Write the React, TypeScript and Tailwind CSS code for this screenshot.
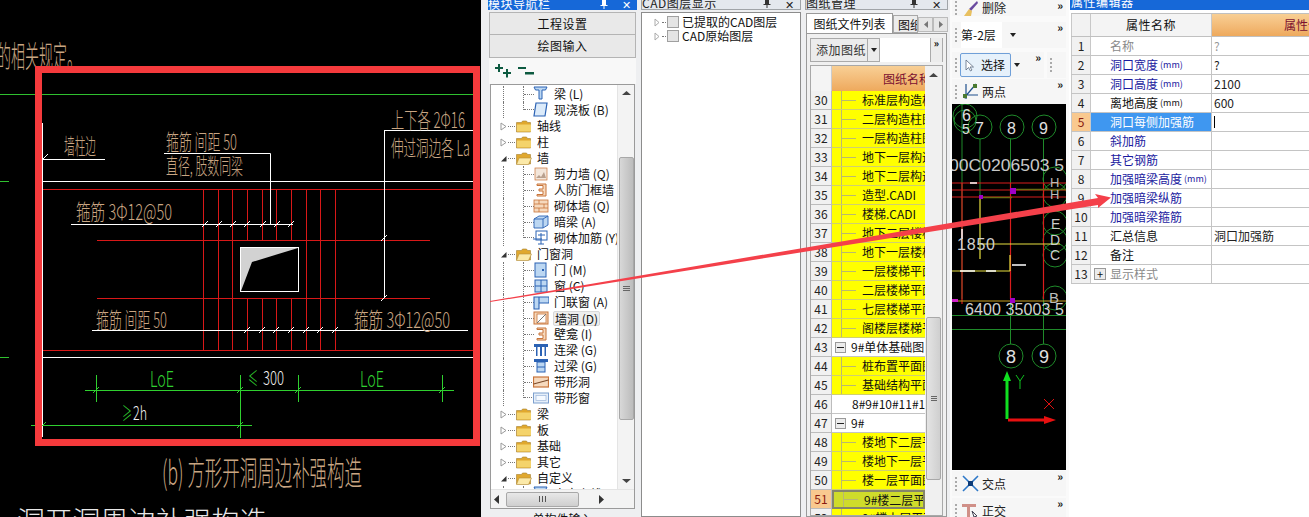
import React from "react";

const tan = "#c9a683";

const Pin = ({ color }: { color: string }) => (
  <svg width="8" height="9" viewBox="0 0 8 9" className="shrink-0">
    <path d="M2 0h4v5h1.5v1H4.5v3h-1V6H.5V5H2z" fill={color} />
  </svg>
);

const TitleBar = ({ title, active }: { title: string; active?: boolean }) => (
  <div
    className={`h-[10px] shrink-0 overflow-hidden flex items-center justify-between pr-[6px] text-[12px] leading-[10px] ${
      active ? "bg-[#1668d8] text-white" : "bg-[#e4e8ee] text-[#222] border border-t-0 border-[#a0a4a8]"
    }`}
  >
    <span className="-mt-[3px] whitespace-nowrap tracking-[0.5px]">{title}</span>
    <span className="flex items-center gap-[14px] -mt-[2px]">
      <Pin color={active ? "#fff" : "#333"} />
      <span className="text-[11px] leading-[10px] font-light">✕</span>
    </span>
  </div>
);

const Folder = ({ open }: { open?: boolean }) => (
  <svg width="16" height="13" viewBox="0 0 16 13" className="shrink-0">
    <path d="M0.5 2.5h5l1-1.5h4l1 1.5h3v9.5h-14z" fill="#e0a82e" stroke="#a5802f" strokeWidth="0.6" />
    {open ? (
      <path d="M3 6h12.5l-3 6.5H.5z" fill="#fbe9a8" stroke="#b58f3a" strokeWidth="0.6" />
    ) : (
      <path d="M1 4.5h14v7H1z" fill="#f4d36b" />
    )}
  </svg>
);

const TreeIcon = ({ kind }: { kind: string }) => {
  const blue = "#2b62b4";
  const lt = "#bcd7f2";
  const or = "#c8743a";
  const pe = "#f6d9bd";
  const shapes: Record<string, React.ReactNode> = {
    beam: <path d="M1 1h13l-1.5 3H9v9H6V4H2.5z" fill={lt} stroke={blue} strokeWidth="1" />,
    slab: <path d="M3 1h11l-2 13H1z" fill="#dcebfa" stroke={blue} strokeWidth="1.2" />,
    shear: (
      <>
        <rect x="2" y="2" width="12" height="12" fill="#f3e6da" stroke={or} strokeWidth="0.7" />
        <path d="M3 12l3-3 2 2 3-5 2 6z" fill="#b9a08e" />
      </>
    ),
    jamb: <path d="M4 2h9v12H4v-1.5h6V9H6V7h4V3.5H4z" fill={pe} stroke={or} strokeWidth="1" />,
    brick: (
      <>
        <rect x="1" y="2" width="14" height="12" fill={pe} stroke={or} strokeWidth="0.8" />
        <path d="M1 6h14M1 10h14M6 2v4M11 6v4M6 10v4" stroke={or} strokeWidth="0.8" />
      </>
    ),
    dark: <path d="M1 5l5-3h9v9l-5 3H1zM1 5h9v9M10 5l5-3" fill={lt} stroke={blue} strokeWidth="0.9" />,
    rebar: (
      <>
        <rect x="3" y="1" width="11" height="9" fill="#fff" stroke={blue} strokeWidth="1" />
        <path d="M0 9h9M5 5h7M8 3v11M5 14h6" stroke={blue} strokeWidth="1" fill="none" />
      </>
    ),
    door: (
      <>
        <rect x="2" y="1" width="11" height="14" fill={lt} stroke={blue} strokeWidth="1" />
        <rect x="9" y="7" width="2" height="2" fill={blue} />
      </>
    ),
    window: (
      <>
        <rect x="2" y="2" width="12" height="12" fill={lt} stroke={blue} strokeWidth="1" />
        <path d="M8 2v12M2 8h12" stroke={blue} strokeWidth="1" />
      </>
    ),
    doorwin: <path d="M1 3h5v12H1zM6 3h10v6H6z" fill={lt} stroke={blue} strokeWidth="1.1" />,
    hole: (
      <>
        <rect x="1" y="2" width="14" height="12" fill={pe} stroke={or} strokeWidth="1" />
        <rect x="4" y="4" width="9" height="9" fill="#fff" stroke={or} strokeWidth="0.8" />
        <path d="M4 13l9-9" stroke="#777" strokeWidth="1" />
      </>
    ),
    link: <path d="M1 2h14v3h-2v9h-1.5V5H9v9H7V5H4.5v9H3V5H1z" fill={blue} />,
    lintel: (
      <>
        <path d="M1 1h14v3H1z" fill={blue} />
        <rect x="4" y="4" width="8" height="10" fill={lt} stroke={blue} strokeWidth="1" />
        <path d="M4 9h8" stroke={blue} />
      </>
    ),
    strip: (
      <>
        <rect x="0.5" y="3" width="15" height="10" fill={pe} stroke={or} strokeWidth="1.2" />
        <path d="M0.5 10l15-4" stroke="#7a4a2a" strokeWidth="1.2" />
      </>
    ),
    stripw: (
      <>
        <rect x="0.5" y="3" width="15" height="10" fill="#e6eff9" stroke="#7d9fce" strokeWidth="1" />
        <rect x="3" y="5.5" width="10" height="5" fill="#f6faff" stroke="#9cb6da" strokeWidth="0.7" />
      </>
    ),
  };
  return (
    <svg width="16" height="16" viewBox="0 0 16 16" className="shrink-0 -ml-[1px]">
      {shapes[kind]}
    </svg>
  );
};

type Row = { label: string; kind?: string; open?: boolean; hot?: boolean; last?: boolean };

const treeRows: Row[] = [
  { label: "梁 (L)", kind: "beam" },
  { label: "现浇板 (B)", kind: "slab", last: true },
  { label: "轴线" },
  { label: "柱" },
  { label: "墙", open: true },
  { label: "剪力墙 (Q)", kind: "shear" },
  { label: "人防门框墙", kind: "jamb" },
  { label: "砌体墙 (Q)", kind: "brick" },
  { label: "暗梁 (A)", kind: "dark" },
  { label: "砌体加筋 (Y)", kind: "rebar", last: true },
  { label: "门窗洞", open: true },
  { label: "门 (M)", kind: "door" },
  { label: "窗 (C)", kind: "window" },
  { label: "门联窗 (A)", kind: "doorwin" },
  { label: "墙洞 (D)", kind: "hole", hot: true },
  { label: "壁龛 (I)", kind: "jamb" },
  { label: "连梁 (G)", kind: "link" },
  { label: "过梁 (G)", kind: "lintel" },
  { label: "带形洞", kind: "strip" },
  { label: "带形窗", kind: "stripw", last: true },
  { label: "梁" },
  { label: "板" },
  { label: "基础" },
  { label: "其它" },
  { label: "自定义", open: true },
  { label: "自定义线", kind: "beam" },
];

const ScrollArrow = ({ d }: { d: string }) => (
  <svg width="9" height="6" viewBox="0 0 9 6">
    <path d={d} fill="#444" />
  </svg>
);

const ModuleNav = () => (
  <div className="w-[156px] pl-[7px] shrink-0 flex flex-col">
    <TitleBar title="模块导航栏" active />
    <div className="mx-[1px] mt-[2px] h-[23px] shrink-0 flex items-center justify-center bg-[#e9e9e9] border border-[#b4b4b4] text-[12px] text-[#111] tracking-[0.5px]">
      工程设置
    </div>
    <div className="mx-[1px] h-[23px] shrink-0 flex items-center justify-center bg-[#e9e9e9] border border-t-0 border-[#b4b4b4] text-[12px] text-[#111] tracking-[0.5px]">
      绘图输入
    </div>
    <div className="mx-[1px] h-[26px] shrink-0 flex items-center gap-[6px] pl-[6px] bg-[#f8f8f8]">
      <svg width="17" height="14" viewBox="0 0 17 14">
        <path d="M3 0h2v3h3v2H5v3H3V5H0V3h3zM11 5h2v3h3v2h-3v3.500h-2V10H8V8h3z" fill="#0d5a40" />
      </svg>
      <svg width="17" height="14" viewBox="0 0 17 14">
        <path d="M0 3h8v2H0zM7 8h9v2.500H7z" fill="#0d5a40" />
      </svg>
    </div>
    <div className="mx-[2px] h-[425px] shrink-0 border border-[#9a9a9a] bg-white flex flex-col overflow-hidden">
      <div className="flex flex-1 min-h-0">
        <div className="w-[126px] overflow-hidden pt-[1px] text-[12px] text-[#111]">
          {treeRows.map((r) => (
            <div key={r.label + (r.kind ?? "")} className="h-4 flex items-center whitespace-nowrap">
              {r.kind ? (
                <>
                  <span className="ml-[12px] w-[20px] h-full shrink-0 border-l border-dotted border-[#777]" />
                  <span
                    className={`w-[11px] shrink-0 flex items-center border-l border-dotted border-[#777] ${
                      r.last ? "h-2 self-start items-end" : "h-full"
                    }`}
                  >
                    <span className="w-full border-t border-dotted border-[#777]" />
                  </span>
                  <TreeIcon kind={r.kind} />
                  <span
                    className={`ml-[4px] px-[1px] ${
                      r.hot ? "bg-[#eeeeee] border border-[#d8d8d8] rounded-[2px] h-[15px] leading-[13px]" : ""
                    }`}
                  >
                    {r.label}
                  </span>
                </>
              ) : (
                <>
                  <span className="ml-[9px] w-[7px] shrink-0 flex items-center">
                    {r.open ? (
                      <svg width="7" height="7" viewBox="0 0 7 7">
                        <path d="M6.5 1v5.5H1z" fill="#333" />
                      </svg>
                    ) : (
                      <svg width="7" height="9" viewBox="0 0 7 9">
                        <path d="M1 1l5 3.5L1 8z" fill="#fff" stroke="#999" />
                      </svg>
                    )}
                  </span>
                  <span className="w-[7px] mx-[1px] shrink-0 border-t border-dotted border-[#777]" />
                  <Folder open={r.open} />
                  <span className="ml-[5px]">{r.label}</span>
                </>
              )}
            </div>
          ))}
        </div>
        <div className="w-[17px] ml-auto flex flex-col items-center bg-[#f3f3f3] border-l border-[#e4e4e4]">
          <div className="h-[16px] flex items-center">
            <ScrollArrow d="M4.5 1L9 5H0z" />
          </div>
          <div className="mt-[56px] w-[15px] h-[263px] rounded-[2px] border border-[#a8a8a8] bg-gradient-to-r from-[#d8d8d8] to-[#bcbcbc] flex flex-col items-center justify-center gap-[1px]">
            <span className="w-[7px] h-[1px] bg-[#666]" />
            <span className="w-[7px] h-[1px] bg-[#666]" />
            <span className="w-[7px] h-[1px] bg-[#666]" />
          </div>
          <div className="mt-auto h-[16px] flex items-center">
            <ScrollArrow d="M0 1h9L4.500 5z" />
          </div>
        </div>
      </div>
      <div className="h-[19px] shrink-0 bg-[#f3f3f3] border-t border-[#e4e4e4] flex items-center px-[3px]">
        <svg width="6" height="9" viewBox="0 0 6 9">
          <path d="M5 0v9L0 4.5z" fill="#333" />
        </svg>
        <div className="ml-[6px] w-[73px] h-[15px] rounded-[2px] border border-[#a8a8a8] bg-gradient-to-b from-[#e8e8e8] to-[#cfcfcf] flex items-center justify-center gap-[1px]">
          <span className="w-[1px] h-[6px] bg-[#555]" />
          <span className="w-[1px] h-[6px] bg-[#555] ml-[1px]" />
          <span className="w-[1px] h-[6px] bg-[#555] ml-[1px]" />
        </div>
        <svg width="6" height="9" viewBox="0 0 6 9" className="ml-[20px]">
          <path d="M0 0v9l5-4.5z" fill="#333" />
        </svg>
      </div>
    </div>
    <div className="mx-[2px] mt-[3px] shrink-0 text-center text-[12px] leading-[14px] text-[#111]">单构件输入</div>
  </div>
);

const Check = ({ label }: { label: string }) => (
  <div className="h-[14px] flex items-center whitespace-nowrap">
    <svg width="7" height="9" viewBox="0 0 7 9" className="ml-[12px] shrink-0">
      <path d="M1 1l4 3.5L1 8z" fill="#fff" stroke="#aaa" />
    </svg>
    <span className="w-[4px] mx-[1px] border-t border-dotted border-[#777]" />
    <span className="w-[12px] h-[12px] border border-[#a0a0a0] bg-[#e4e4e4] shrink-0" />
    <span className="ml-[3px] text-[12px] text-[#111]">{label}</span>
  </div>
);

const CadLayers = () => (
  <div className="w-[166px] shrink-0 pl-[4px] pr-[2px] flex flex-col">
    <TitleBar title="CAD图层显示" />
    <div className="h-[505px] shrink-0 mt-[2px] border border-[#8c8c8c] bg-white pt-[2px] flex flex-col">
      <Check label="已提取的CAD图层" />
      <Check label="CAD原始图层" />
    </div>
  </div>
);

type Drawing = { n: number; name: string; type?: "group" | "plain"; sel?: boolean };

const drawings: Drawing[] = [
  { n: 30, name: "标准层构造柱平面" },
  { n: 31, name: "二层构造柱图" },
  { n: 32, name: "一层构造柱图" },
  { n: 33, name: "地下一层构造柱" },
  { n: 34, name: "地下二层构造柱" },
  { n: 35, name: "造型.CADI" },
  { n: 36, name: "楼梯.CADI" },
  { n: 37, name: "地下二层楼梯" },
  { n: 38, name: "地下一层楼梯" },
  { n: 39, name: "一层楼梯平面" },
  { n: 40, name: "二层楼梯平面" },
  { n: 41, name: "七层楼梯平面" },
  { n: 42, name: "阁楼层楼梯平面" },
  { n: 43, name: "9#单体基础图", type: "group" },
  { n: 44, name: "桩布置平面图" },
  { n: 45, name: "基础结构平面图" },
  { n: 46, name: "8#9#10#11#15#", type: "plain" },
  { n: 47, name: "9#", type: "group" },
  { n: 48, name: "楼地下二层平面" },
  { n: 49, name: "楼地下一层平面" },
  { n: 50, name: "楼一层平面图" },
  { n: 51, name: "9#楼二层平面", sel: true },
  { n: 52, name: "9#楼上层平面" },
];

const MinusBox = () => (
  <span className="w-[11px] h-[11px] ml-[3px] shrink-0 border border-[#9a9a9a] bg-[#ececec] flex items-center justify-center">
    <span className="w-[7px] h-[1px] bg-[#222]" />
  </span>
);

const Drawings = () => (
  <div className="w-[147px] shrink-0 pl-[2px] pr-[2px] flex flex-col">
    <TitleBar title="图纸管理" />
    <div className="h-[21px] shrink-0 mt-[2px] relative flex items-end pl-[1px]">
      <div className="h-[20px] w-[87px] bg-white border border-b-0 border-[#9a9a9a] text-[12px] text-center leading-[19px] text-[#111]">
        图纸文件列表
      </div>
      <div className="h-[18px] w-[25px] overflow-hidden bg-[#ececec] border border-[#a8a8a8] text-[12px] leading-[17px] pl-[4px] whitespace-nowrap text-[#111]">
        图纸楼层
      </div>
      <div className="h-[15px] w-[15px] ml-[0px] mb-[1px] bg-[#e6e6e6] border border-[#bbb] flex items-center justify-center">
        <svg width="4" height="7" viewBox="0 0 4 7">
          <path d="M4 0v7L0 3.5z" fill="#777" />
        </svg>
      </div>
      <div className="h-[15px] w-[15px] mb-[1px] bg-[#e6e6e6] border border-[#bbb] flex items-center justify-center">
        <svg width="4" height="7" viewBox="0 0 4 7">
          <path d="M0 0v7l4-3.5z" fill="#777" />
        </svg>
      </div>
    </div>
    <div className="mx-[1px] h-[484px] shrink-0 border border-[#9a9a9a] bg-[#f0f0f0] px-[3px] pt-[4px] flex flex-col">
      <div className="h-[24px] flex bg-white border-r border-[#aaa] shrink-0">
        <div className="w-[58px] flex items-center justify-between bg-[#ececec] border border-[#aaa]">
          <span className="pl-[5px] text-[12px] text-[#333] tracking-[0.5px] whitespace-nowrap">添加图纸</span>
        </div>
        <div className="w-[12px] flex items-center justify-center bg-[#ececec] border border-l-0 border-[#aaa]">
          <svg width="6" height="4" viewBox="0 0 6 4">
            <path d="M0 0h6L3 4z" fill="#222" />
          </svg>
        </div>
        <span className="ml-auto w-[12px] bg-[#ececec] border-l border-[#aaa] text-[10px] leading-[10px] font-bold text-center">»</span>
      </div>
      <div className="mt-[3px] flex-1 min-h-0 overflow-hidden border border-[#a8a8a8] bg-white flex">
        <div className="w-[114px] shrink-0">
          <div className="h-[25px] flex">
            <div className="w-[21px] bg-[#f4f4f4] border-r border-[#ccc]" />
            <div className="flex-1 overflow-hidden bg-gradient-to-b from-[#f8cf95] to-[#eea95c] pl-[51px] text-[12px] leading-[25px] text-[#7a1030] whitespace-nowrap">
              图纸名称
            </div>
          </div>
          {drawings.map((d) => (
            <div key={d.n} className="h-[19px] flex">
              <div
                className={`w-[21px] shrink-0 text-center text-[12px] leading-[18px] border-b border-r border-[#bcbcbc] ${
                  d.sel ? "bg-[#f9c98f] text-[#8a1a10]" : "bg-[#f1f1f1] text-[#222]"
                }`}
              >
                {d.n}
              </div>
              <div
                className={`flex-1 overflow-hidden flex items-center text-[12px] text-[#111] whitespace-nowrap ${
                  d.sel
                    ? "bg-[#cfdc2b] border-2 border-[#85856a]"
                    : d.type
                      ? "bg-white border-b border-[#c4c4c4]"
                      : "bg-[#ffff00] border-b border-[#cfcf70]"
                }`}
              >
                {d.type === "group" ? (
                  <>
                    <MinusBox />
                    <span className="ml-[5px]">{d.name}</span>
                  </>
                ) : d.type === "plain" ? (
                  <span className="ml-[20px]">{d.name}</span>
                ) : (
                  <>
                    <span className="ml-[9px] w-[15px] h-full shrink-0 flex items-center border-l border-[#b9b970]">
                      <span className="w-full border-t border-[#b9b970]" />
                    </span>
                    <span className="ml-[6px]">{d.name}</span>
                  </>
                )}
              </div>
            </div>
          ))}
        </div>
        <div className="flex-1 bg-[#f0f0f0] flex flex-col items-center">
          <div className="h-[18px] flex items-center">
            <ScrollArrow d="M4.5 1L9 5H0z" />
          </div>
          <div className="mt-[233px] w-[15px] h-[163px] rounded-[2px] border border-[#a8a8a8] bg-gradient-to-r from-[#e4e4e4] to-[#cfcfcf] flex flex-col items-center justify-center gap-[1px]">
            <span className="w-[6px] h-[1px] bg-[#666]" />
            <span className="w-[6px] h-[1px] bg-[#666]" />
            <span className="w-[6px] h-[1px] bg-[#666]" />
          </div>
        </div>
      </div>
    </div>
  </div>
);

const Grip = () => (
  <span className="flex flex-col gap-[2px] ml-[3px] w-[3px] shrink-0">
    <span className="w-[2px] h-[2px] bg-[#aaa]" />
    <span className="w-[2px] h-[2px] bg-[#aaa]" />
    <span className="w-[2px] h-[2px] bg-[#aaa]" />
    <span className="w-[2px] h-[2px] bg-[#aaa]" />
  </span>
);

const More = () => <span className="ml-auto mr-[3px] self-start text-[11px] leading-[11px] font-bold text-[#111]">»</span>;

const Viewport = () => (
  <svg
    viewBox="952 105 114 366"
    className="w-[114px] h-[366px] shrink-0 bg-black block"
    fontFamily="'Liberation Sans', sans-serif"
  >
    <g stroke="#1f8a2a" fill="none">
      <circle cx="965" cy="117" r="12" />
      <circle cx="965" cy="122" r="11" />
      <circle cx="980" cy="128" r="12" />
      <circle cx="1012" cy="128" r="12" />
      <circle cx="1044" cy="128" r="12" />
      <circle cx="1055" cy="180" r="12" />
      <circle cx="1055" cy="196" r="12" />
      <circle cx="1055" cy="224" r="12" />
      <circle cx="1055" cy="241" r="12" />
      <circle cx="1055" cy="256" r="12" />
      <circle cx="1055" cy="299" r="12" />
      <circle cx="1011" cy="357" r="12" />
      <circle cx="1044" cy="357" r="12" />
      <path d="M962 105V300M980 140V198M1010.5 140V190M1043.5 140V300M1010.5 300V345M1043.500 300V345M952 316.5H1066M952 330.5H1066" />
    </g>
    <g stroke="#d81c1c" fill="none" strokeWidth="1.2">
      <path d="M952 184H1066M952 191H1066M952 198H1066M962 184V305M1010.5 184V300M1043.5 184V300" />
    </g>
    <g stroke="#e8e040" fill="none" strokeWidth="1.2">
      <path d="M980 198V260M980 245H1060M952 272H1010M1010 256V272" />
    </g>
    <path d="M980 198.5H1012M1012 190.5H1066" stroke="#6a6a10" strokeWidth="1.5" />
    <path d="M952 302H1066" stroke="#c9a020" strokeWidth="1.2" />
    <path d="M960 272H975M986 272H996M1012 266H1026" stroke="#fff" strokeWidth="1.5" />
    <path d="M970 184H977M962 230V240" stroke="#fff" strokeWidth="1.5" />
    <rect x="1010" y="189" width="6" height="6" fill="#a000c8" />
    <rect x="979" y="196" width="4" height="4" fill="#a000c8" />
    <rect x="1010" y="299" width="5" height="5" fill="#a000c8" />
    <rect x="952" y="300" width="6" height="3" fill="#d020c8" />
    <g fill="#e0e0e0" fontSize="16" fontWeight="300">
      <text x="962" y="122">6</text>
      <text x="962" y="135" fontSize="14">5</text>
      <text x="975" y="135">7</text>
      <text x="1007" y="135">8</text>
      <text x="1039" y="135">9</text>
      <text x="949" y="172" fontSize="16" textLength="115" lengthAdjust="spacingAndGlyphs" fill="#c8c8c8">
        00C0206503 5
      </text>
      <text x="957" y="251" fontSize="16" textLength="38" lengthAdjust="spacing" fill="#d0d0d0">1850</text>
      <text x="965" y="316" fontSize="16" textLength="99" lengthAdjust="spacing" fill="#d0d0d0">6400 35003 5</text>
      <text x="1006" y="364" fontSize="18">8</text>
      <text x="1039" y="364" fontSize="18">9</text>
      <text x="1050" y="188" fontSize="13" fill="#bbb">H</text>
      <text x="1050" y="200" fontSize="13" fill="#bbb">H</text>
      <text x="1051" y="230" fontSize="14" fill="#ccc">E</text>
      <text x="1050" y="246" fontSize="14" fill="#ccc">D</text>
      <text x="1050" y="261" fontSize="14" fill="#ccc">C</text>
      <text x="1049" y="304" fontSize="15" fill="#bbb">B</text>
    </g>
    <path d="M1005.5 420V382H1003L1007 372L1011 382H1008.5V420z" fill="#10e020" />
    <path d="M1008 419.5H1044V417L1056 421L1044 425V422.5H1008z" fill="#e81010" />
    <path d="M1016 376L1020 382L1024 376M1020 382V390" stroke="#10c020" fill="none" />
    <path d="M1044 400L1054 410M1054 400L1044 410" stroke="#e01010" fill="none" />
  </svg>
);

const BarIcon = ({ kind }: { kind: string }) => (
  <svg width="17" height="17" viewBox="0 0 17 17" className="shrink-0 ml-[4px]">
    {kind === "del" && (
      <>
        <path d="M15 1L7 9l2 2 7-8z" fill="#6a4aa0" />
        <path d="M7 9l-5 7h7l1-5z" fill="#e8c060" />
      </>
    )}
    {kind === "two" && (
      <>
        <path d="M4 1v15M1 12h15M14 1L2 15" stroke="#1f4f8c" strokeWidth="1.2" />
        <rect x="11" y="1" width="4" height="4" fill="#4a7a30" />
        <rect x="1" y="11" width="4" height="4" fill="#4a7a30" />
      </>
    )}
    {kind === "cross" && (
      <>
        <path d="M1 1l15 15M16 1L1 16" stroke="#2d78c8" strokeWidth="1.6" />
        <rect x="6" y="6" width="5" height="5" fill="#0d3c78" />
      </>
    )}
    {kind === "ortho" && (
      <>
        <path d="M0 2h14v3H8v12H5V5H0z" fill="#d09088" />
        <path d="M10 9l5 5-3 1z" fill="none" stroke="#445" />
      </>
    )}
  </svg>
);

const Tools = () => (
  <div className="w-[119px] shrink-0 pl-[2px] flex flex-col bg-[#fafafa]">
    <div className="h-[16px] w-[114px] shrink-0 flex items-center bg-[#f6f6f6] overflow-hidden text-[12px] text-[#222]">
      <Grip />
      <BarIcon kind="del" />
      <span className="ml-[3px]">删除</span>
      <More />
    </div>
    <div className="mt-[6px] h-[26px] w-[114px] shrink-0 flex items-center bg-[#f6f6f6] text-[12px] text-[#111]">
      <Grip />
      <span className="ml-[3px] pr-[6px] h-full leading-[26px] bg-white">第-2层</span>
      <svg width="6" height="4" viewBox="0 0 6 4" className="ml-[8px]">
        <path d="M0 0h6L3 4z" fill="#222" />
      </svg>
      <More />
    </div>
    <div className="mt-[4px] h-[26px] w-[114px] shrink-0 flex items-center text-[12px] text-[#111]">
      <div className="h-full w-[92px] flex items-center bg-[#f6f6f6]">
        <Grip />
        <span className="ml-[2px] h-[24px] w-[51px] flex items-center rounded-[2px] border border-[#6f9fd8] bg-[#e6f1fb]">
          <svg width="10" height="13" viewBox="0 0 10 13" className="ml-[4px]">
            <path d="M1 1v10l2.5-2.5L5.5 12l1.5-1L5 8h3.5z" fill="#fff" stroke="#5a6a80" strokeWidth="0.8" />
          </svg>
          <span className="ml-[6px]">选择</span>
        </span>
        <svg width="6" height="4" viewBox="0 0 6 4" className="ml-[3px]">
          <path d="M0 0h6L3 4z" fill="#222" />
        </svg>
        <More />
      </div>
      <div className="h-full ml-[3px] w-[19px] flex items-center bg-[#f6f6f6]">
        <Grip />
      </div>
    </div>
    <div className="mt-[1px] h-[25px] w-[114px] shrink-0 flex items-center bg-[#f6f6f6] text-[12px] text-[#222]">
      <Grip />
      <BarIcon kind="two" />
      <span className="ml-[3px]">两点</span>
      <More />
    </div>
    <Viewport />
    <div className="mt-[1px] h-[25px] w-[114px] shrink-0 flex items-center bg-[#f6f6f6] text-[12px] text-[#222]">
      <Grip />
      <BarIcon kind="cross" />
      <span className="ml-[3px]">交点</span>
      <More />
    </div>
    <div className="mt-[2px] h-[25px] w-[114px] shrink-0 flex items-center bg-[#f6f6f6] text-[12px] text-[#222]">
      <Grip />
      <BarIcon kind="ortho" />
      <span className="ml-[3px]">正交</span>
      <More />
    </div>
  </div>
);

type Prop = { n: number; name: string; unit?: string; value?: string; tone: "gray" | "blue" | "black" };

const props: Prop[] = [
  { n: 1, name: "名称", value: "?", tone: "gray" },
  { n: 2, name: "洞口宽度", unit: "(mm)", value: "?", tone: "blue" },
  { n: 3, name: "洞口高度", unit: "(mm)", value: "2100", tone: "blue" },
  { n: 4, name: "离地高度", unit: "(mm)", value: "600", tone: "black" },
  { n: 5, name: "洞口每侧加强筋", tone: "blue" },
  { n: 6, name: "斜加筋", tone: "blue" },
  { n: 7, name: "其它钢筋", tone: "blue" },
  { n: 8, name: "加强暗梁高度", unit: "(mm)", tone: "blue" },
  { n: 9, name: "加强暗梁纵筋", tone: "blue" },
  { n: 10, name: "加强暗梁箍筋", tone: "blue" },
  { n: 11, name: "汇总信息", value: "洞口加强筋", tone: "black" },
  { n: 12, name: "备注", tone: "black" },
  { n: 13, name: "显示样式", tone: "gray" },
];

const Properties = () => (
  <div className="flex-1 flex flex-col bg-white">
    <div className="h-[10px] ml-[1px] overflow-hidden bg-[#1668d8] text-white text-[12px] leading-[10px]">
      <span className="-mt-[3px] block pl-[1px] tracking-[0.5px]">属性编辑器</span>
    </div>
    <div className="mt-[3px] ml-[2px]">
      <div className="h-[24px] flex border-y border-[#c0c0c0]">
        <div className="w-[20px] bg-[#f2f2f2] border-x border-[#c8c8c8]" />
        <div className="w-[121px] bg-[#f4f4f4] text-center text-[12px] leading-[22px] text-[#111] tracking-[0.5px] border-r border-[#c8c8c8]">
          属性名称
        </div>
        <div className="flex-1 overflow-hidden bg-gradient-to-b from-[#f8cf95] to-[#eea95c] pl-[72px] text-[12px] leading-[22px] text-[#7a1030] whitespace-nowrap">
          属性值
        </div>
      </div>
      {props.map((p) => {
        const sel = p.n === 5;
        const tone = sel
          ? "text-white bg-[#3f97f0]"
          : p.tone === "blue"
            ? "text-[#1a1aa0]"
            : p.tone === "gray"
              ? "text-[#8a8a8a]"
              : "text-[#111]";
        return (
          <div key={p.n} className="h-[19px] flex text-[12px] border-b border-[#c4c4c4]">
            <div
              className={`w-[20px] text-center leading-[18px] border-x border-[#c8c8c8] ${
                sel ? "bg-[#f9c98f] text-[#8a1a10]" : "bg-[#f1f1f1] text-[#222]"
              }`}
            >
              {p.n}
            </div>
            <div className={`w-[121px] flex items-center whitespace-nowrap border-r border-[#c4c4c4] ${tone}`}>
              {p.n === 13 ? (
                <span className="ml-[3px] mr-[4px] w-[12px] h-[12px] border border-[#9a9a9a] bg-[#ececec] relative flex items-center justify-center text-[#111] text-[11px] leading-none">
                  +
                </span>
              ) : (
                <span className="w-[19px]" />
              )}
              <span>{p.name}</span>
              {p.unit && <span className="ml-[2px] text-[9px]">{p.unit}</span>}
            </div>
            <div className="flex-1 pl-[2px] flex items-center text-[#222]">
              {sel ? (
                <span className="w-[1px] h-[12px] bg-black" />
              ) : (
                <span className={p.n === 1 ? "text-[#999]" : ""}>{p.value}</span>
              )}
            </div>
          </div>
        );
      })}
    </div>
  </div>
);

const CadLabel = ({
  x,
  y,
  w,
  size,
  fill = tan,
  children,
}: {
  x: number;
  y: number;
  w: number;
  size: number;
  fill?: string;
  children: React.ReactNode;
}) => (
  <text x={x} y={y} fontSize={size} fill={fill} fontWeight={300} textLength={w} lengthAdjust="spacingAndGlyphs">
    {children}
  </text>
);

const longBars = [203.5, 218.5, 232.5, 306.5, 320.5, 335.5];
const shortBars = [247.5, 262.5, 276.5, 291.5];
const ticksTop = [205, 219, 233, 247, 263, 277, 291];
const ticksBottom = [247, 262, 276, 291, 306, 320, 335];

const tick = (x: number, y: number) => `M${x - 3} ${y + 3}L${x + 3} ${y - 3}`;

const CadDrawing = () => (
  <div className="w-[481px] shrink-0 bg-black">
    <svg viewBox="0 0 481 517" className="w-[481px] h-[517px] block" fontFamily="'Noto Sans CJK SC', sans-serif">
      <path d="M0 94.5H473M0 181.5H9M0 357.5H9" stroke="#2fc02f" fill="none" />
      <g stroke="#d81818" fill="none">
        <path d="M43 189.5H473M97 240.5H430M97 298.5H430M43 350.5H473" />
        {longBars.map((x) => (
          <path key={x} d={`M${x} 189V350`} />
        ))}
        {shortBars.map((x) => (
          <path key={x} d={`M${x} 189V240M${x} 298V350`} />
        ))}
      </g>
      <g stroke="#fff" fill="none">
        <path d="M42.5 123V437M43 159.5H105M43 181.5H473M164 153.5H270.5V224M71 224.5H293M384.5 130V298M384.5 130.5H473M92 330.5H468M43 357.5H473" />
        {ticksTop.map((x) => (
          <path key={x} d={tick(x, 224)} />
        ))}
        {ticksBottom.map((x) => (
          <path key={x} d={tick(x, 330)} />
        ))}
        <path d={tick(384, 238)} />
        <path d={tick(384, 298)} />
        <path d={tick(45, 157)} />
        <rect x="240.5" y="247.5" width="58" height="44" />
      </g>
      <path d="M241 248H298L252 262L241 291z" fill="#d2d2d2" />
      <g stroke="#2fd02f" fill="none">
        <path d="M85 390.5H454M31 425.5H252M96.5 375V402M240.5 375V438M298.5 375V402M442.5 375V402" />
        <path d={tick(96, 390)} />
        <path d={tick(240, 390)} />
        <path d={tick(298, 390)} />
        <path d={tick(442, 390)} />
        <path d={tick(43, 425)} />
        <path d={tick(240, 425)} />
      </g>
      <CadLabel x={-3} y={67} w={84} size={30}>的相关规定。</CadLabel>
      <CadLabel x={64} y={154} w={32} size={22}>墙柱边</CadLabel>
      <CadLabel x={166} y={150} w={71} size={22}>箍筋 间距 50</CadLabel>
      <CadLabel x={166} y={174} w={77} size={22}>直径, 肢数同梁</CadLabel>
      <CadLabel x={391} y={128} w={74} size={22}>上下各 2Φ16</CadLabel>
      <CadLabel x={391} y={156} w={79} size={22}>伸过洞边各 La</CadLabel>
      <CadLabel x={76} y={220} w={96} size={22}>箍筋 3Φ12@50</CadLabel>
      <CadLabel x={96} y={328} w={71} size={22}>箍筋 间距 50</CadLabel>
      <CadLabel x={354} y={328} w={96} size={22}>箍筋 3Φ12@50</CadLabel>
      <CadLabel x={162} y={485} w={200} size={33}>(b) 方形开洞周边补强构造</CadLabel>
      <CadLabel x={17} y={532} w={250} size={28} fill="#e8e8e8">洞开洞周边补强构造</CadLabel>
      <CadLabel x={150} y={387} w={24} size={22} fill="#30d030">LoE</CadLabel>
      <CadLabel x={360} y={387} w={24} size={22} fill="#30d030">LoE</CadLabel>
      <CadLabel x={248} y={386} w={10} size={20} fill="#30d030">≤</CadLabel>
      <CadLabel x={263} y={385} w={21} size={19} fill="#f0f0f0">300</CadLabel>
      <CadLabel x={122} y={421} w={10} size={20} fill="#30d030">≥</CadLabel>
      <CadLabel x={133} y={420} w={14} size={19} fill="#f0f0f0">2h</CadLabel>
    </svg>
  </div>
);

export default function App() {
  return (
    <div className="relative w-[1309px] h-[517px] overflow-hidden flex bg-[#eeeff1] font-['Noto_Sans_CJK_SC',sans-serif]">
      <CadDrawing />
      <ModuleNav />
      <CadLayers />
      <Drawings />
      <Tools />
      <Properties />
      {/* red markup drawn over the screenshot */}
      <div className="absolute left-[35px] top-[66px] w-[445px] h-[380px] border-[7px] border-[#f53a3c] pointer-events-none" />
      <svg viewBox="0 0 1309 517" className="absolute inset-0 w-[1309px] h-[517px] pointer-events-none">
        <path d="M490 301L1098 198L1095 194L1111 197.5L1098 208L1098 205L490 302z" fill="#f4404a" />
      </svg>
    </div>
  );
}
